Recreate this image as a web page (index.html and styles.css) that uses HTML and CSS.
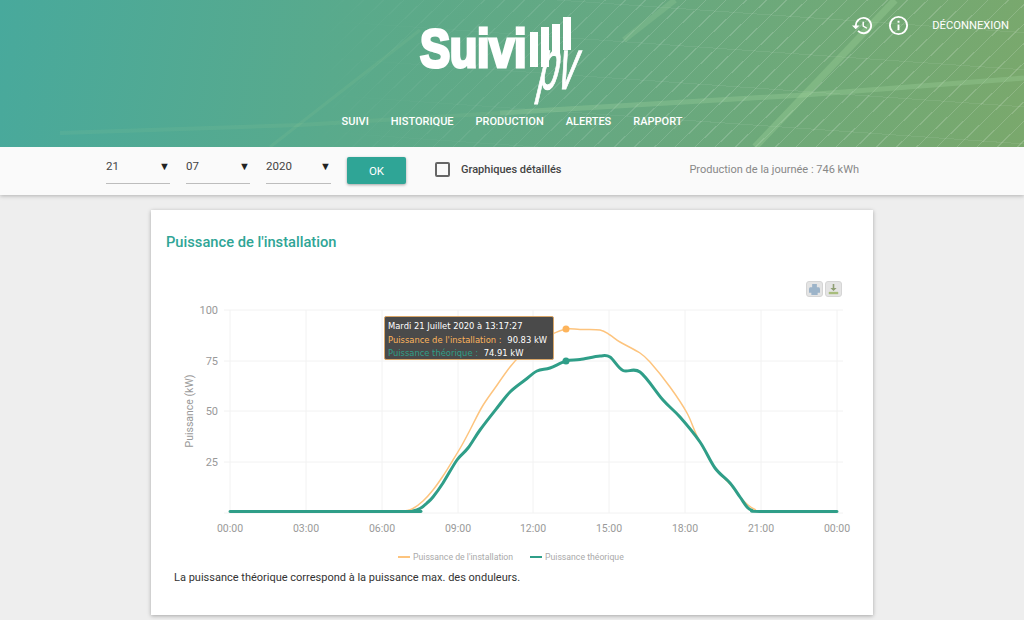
FILE: index.html
```html
<!DOCTYPE html>
<html lang="fr">
<head>
    <meta charset="UTF-8">
    <title>Suivi PV</title>
    <link rel="stylesheet" href="styles.css">
</head>
<body>
    <header class="site-header">
        <div class="panel-lines"></div>
        <svg class="header-texture" viewBox="0 0 1024 147" aria-hidden="true">
            <g stroke="#a5d6a0" fill="none">
                <path d="M60 133L300 125 500 113" stroke-opacity=".1" stroke-width="4"/>
                <path d="M500 113L804 95 1024 78" stroke-opacity=".28" stroke-width="5"/>
                <path d="M270 147L420 30" stroke-opacity=".1" stroke-width="3"/>
                <path d="M755 147L895 0" stroke-opacity=".3" stroke-width="7"/>
                <path d="M624 40L675 0" stroke-opacity=".22" stroke-width="6"/>
            </g>
        </svg>
        <div class="header-actions">
            <svg class="action-icon" viewBox="0 0 24 24" aria-hidden="true">
                <path fill="#fff" d="M13 3a9 9 0 0 0-9 9H1l3.9 3.9L9 12H6a7 7 0 1 1 2.05 4.95l-1.42 1.42A9 9 0 1 0 13 3zm-1 5v5l4.25 2.52.77-1.28-3.52-2.09V8z"/>
            </svg>
            <svg class="action-icon" viewBox="0 0 24 24" aria-hidden="true">
                <path fill="#fff" d="M11 7h2v2h-2zm0 4h2v6h-2zm1-9a10 10 0 1 0 0 20 10 10 0 0 0 0-20zm0 18a8 8 0 1 1 0-16 8 8 0 0 1 0 16z"/>
            </svg>
            <a class="logout" href="#">DÉCONNEXION</a>
        </div>
        <div class="logo">
            <span class="logo-word">Suivi</span>
            <span class="logo-bars"><i></i><i></i><i></i><i></i></span>
            <span class="logo-pv">pv</span>
        </div>
        <nav class="main-nav">
            <a href="#">SUIVI</a>
            <a href="#">HISTORIQUE</a>
            <a href="#">PRODUCTION</a>
            <a href="#">ALERTES</a>
            <a href="#">RAPPORT</a>
        </nav>
    </header>

    <section class="toolbar">
        <div class="field day"><span>21</span><b>▼</b></div>
        <div class="field month"><span>07</span><b>▼</b></div>
        <div class="field year"><span>2020</span><b>▼</b></div>
        <button class="btn-ok">OK</button>
        <label class="check"><span class="check-box"></span>Graphiques détaillés</label>
        <p class="production">Production de la journée : 746 kWh</p>
    </section>

    <main class="card">
        <h2>Puissance de l'installation</h2>
        <div class="chart">
            <div class="export">
                <button class="export-btn">
                    <svg viewBox="0 0 16 14" aria-hidden="true"><path fill="#9db4c9" d="M5 0h6v4h3l1 2v5h-3v3H4v-3H1V6l1-2h3z"/></svg>
                </button>
                <button class="export-btn">
                    <svg viewBox="0 0 16 14" aria-hidden="true"><path fill="#8f9f74" d="M7 0h2v5h3l-4 4-4-4h3z"/><path fill="#a8bd7c" d="M2 10h12v3H2z"/></svg>
                </button>
            </div>
            <svg class="plot" viewBox="166 270 692 295">
                <g class="grid">
                    <path d="M230 310V513M306 310V513M382 310V513M458 310V513M533 310V513M609 310V513M685 310V513M761 310V513M837 310V513"/>
                    <path d="M224 310H843M224 361H843M224 411H843M224 462H843M224 513H843"/>
                </g>
                <g class="y-labels">
                    <text x="218" y="314">100</text>
                    <text x="218" y="365">75</text>
                    <text x="218" y="415">50</text>
                    <text x="218" y="466">25</text>
                </g>
                <text class="y-title" transform="translate(193 411) rotate(-90)">Puissance (kW)</text>
                <g class="x-labels">
                    <text x="230" y="532">00:00</text>
                    <text x="306" y="532">03:00</text>
                    <text x="382" y="532">06:00</text>
                    <text x="458" y="532">09:00</text>
                    <text x="533" y="532">12:00</text>
                    <text x="609" y="532">15:00</text>
                    <text x="685" y="532">18:00</text>
                    <text x="761" y="532">21:00</text>
                    <text x="837" y="532">00:00</text>
                </g>
                <path id="line-install" class="line-install"/>
                <path id="line-theo" class="line-theo"/>
                <circle cx="566" cy="329" r="3.5" fill="#fdb45c"/>
                <circle cx="566" cy="361" r="3.5" fill="#2f9e88"/>
                <g class="legend">
                    <path d="M398 557H410" stroke="#fdc47e" stroke-width="2"/>
                    <text x="413" y="560">Puissance de l'installation</text>
                    <path d="M530 557H542" stroke="#2f9e88" stroke-width="2"/>
                    <text x="545" y="560">Puissance théorique</text>
                </g>
            </svg>
            <div class="tooltip">
                <div>Mardi 21 Juillet 2020 à 13:17:27</div>
                <div><span class="tip-install">Puissance de l'installation :</span> <b>90.83 kW</b></div>
                <div><span class="tip-theo">Puissance théorique :</span> <b>74.91 kW</b></div>
            </div>
        </div>
        <p class="note">La puissance théorique correspond à la puissance max. des onduleurs.</p>
    </main>
    <script src="chart.js"></script>
</body>
</html>
```
FILE: styles.css
```css
/* General Styles */
* {
    margin: 0;
    padding: 0;
    box-sizing: border-box;
}

html, body {
    height: 620px;
    overflow: hidden;
}

body {
    font-family: Roboto, sans-serif;
    background: #eeeeee;
    color: #333;
}

/* Header */
.site-header {
    position: relative;
    height: 147px;
    background: linear-gradient(100deg, #48a99c 0%, #5aaa8b 35%, #66a881 60%, #70a977 80%, #7aa86c 100%);
    overflow: hidden;
    display: flex;
    flex-direction: column;
    align-items: center;
}

.panel-lines {
    position: absolute;
    inset: 0;
    background:
        repeating-linear-gradient(136deg, rgba(255, 255, 255, .16) 0 1px, transparent 1px 14px),
        repeating-linear-gradient(4deg, rgba(255, 255, 255, .07) 0 1px, transparent 1px 37px);
    -webkit-mask-image: linear-gradient(90deg, transparent 30%, #000 70%);
    mask-image: linear-gradient(90deg, transparent 30%, #000 70%);
}

.header-texture {
    position: absolute;
    left: 0;
    top: 0;
    width: 100%;
    height: 100%;
}

.header-actions {
    position: absolute;
    top: 14px;
    right: 15px;
    display: flex;
    align-items: center;
}

.action-icon {
    width: 23px;
    height: 23px;
    margin-right: 13px;
}

.logout {
    margin-left: 9px;
    color: #fff;
    font-size: 11.2px;
    text-decoration: none;
}

.logo {
    position: relative;
    width: 156px;
    height: 85px;
    margin: 17px 0 0 -30px;
    color: #fff;
}

.logo-word {
    position: absolute;
    left: 1px;
    top: 1px;
    font-family: "Liberation Sans", sans-serif;
    font-size: 54px;
    font-weight: 700;
    letter-spacing: -.5px;
    line-height: 60px;
    transform: scaleX(.84);
    transform-origin: left top;
    -webkit-text-stroke: 3.2px #fff;
}

.logo-bars {
    position: absolute;
    left: 111px;
    top: 0;
    display: flex;
    align-items: flex-start;
    gap: 3px;
}

.logo-bars i {
    display: block;
    width: 8px;
    background: #fff;
}

.logo-bars i:nth-child(1) { margin-top: 15px; height: 35px; }
.logo-bars i:nth-child(2) { margin-top: 10px; height: 40px; }
.logo-bars i:nth-child(3) { margin-top: 7px; height: 32px; }
.logo-bars i:nth-child(4) { height: 33px; }

.logo-pv {
    position: absolute;
    left: 127px;
    top: 11px;
    font-family: "Liberation Sans", sans-serif;
    font-style: italic;
    font-size: 72px;
    line-height: 72px;
    letter-spacing: -1px;
    transform: skewX(-8deg) scaleX(.5);
    transform-origin: left top;
    -webkit-text-stroke: 1.2px #fff;
}

.main-nav {
    position: relative;
    display: flex;
    gap: 22px;
    margin-top: 13px;
}

.main-nav a {
    color: #fff;
    font-size: 11px;
    line-height: 14px;
    font-weight: 500;
    text-decoration: none;
}

/* Toolbar */
.toolbar {
    height: 48px;
    background: #fafafa;
    box-shadow: 0 1px 4px rgba(0, 0, 0, .25);
    display: flex;
    align-items: flex-start;
    padding-left: 106px;
}

.field {
    display: flex;
    justify-content: space-between;
    align-items: center;
    height: 37px;
    margin-right: 16px;
    padding-top: 2px;
    border-bottom: 1px solid #bdbdbd;
    font-size: 11.5px;
    color: #444;
    width: 64px;
}

.field b {
    font-size: 11px;
    font-weight: 400;
    color: #222;
}

.field.year {
    width: 65px;
}

.btn-ok {
    width: 59px;
    height: 27px;
    margin-top: 10px;
    border: none;
    border-radius: 2px;
    background: #2fa596;
    box-shadow: 0 1px 3px rgba(0, 0, 0, .35);
    color: #fff;
    font-family: inherit;
    font-size: 11.5px;
    font-weight: 400;
}

.check {
    display: flex;
    align-items: center;
    height: 44px;
    margin-left: 29px;
    font-size: 11px;
    font-weight: 500;
    color: #444;
}

.check-box {
    width: 15px;
    height: 15px;
    margin-right: 11px;
    border: 2px solid #666;
    border-radius: 2px;
}

.production {
    margin-left: auto;
    margin-right: 165px;
    line-height: 45px;
    font-size: 11px;
    color: #888;
}

/* Card */
.card {
    width: 722px;
    height: 405px;
    margin: 15px 0 0 151px;
    padding: 0 15px;
    background: #fff;
    box-shadow: 0 1px 4px rgba(0, 0, 0, .3);
}

.card h2 {
    padding-top: 24px;
    font-size: 14.7px;
    line-height: 17px;
    font-weight: 500;
    color: #2fa596;
}

.chart {
    position: relative;
    height: 295px;
    margin-top: 19px;
}

.plot {
    display: block;
    width: 692px;
    height: 295px;
    font-family: Roboto, sans-serif;
}

.grid path {
    fill: none;
    stroke: #f2f2f2;
    stroke-width: 1;
}

.y-labels text {
    font-size: 11px;
    fill: #999;
    text-anchor: end;
}

.x-labels text {
    font-size: 10.5px;
    fill: #999;
    text-anchor: middle;
}

.y-title {
    font-size: 10.5px;
    fill: #999;
    text-anchor: middle;
}

.legend text {
    font-size: 8.7px;
    fill: #aaa;
}

.line-install,
.line-theo {
    fill: none;
    stroke-linejoin: round;
    stroke-linecap: round;
}

.line-install {
    stroke: #fdc47e;
    stroke-width: 1.5;
}

.line-theo {
    stroke: #2f9e88;
    stroke-width: 3;
}

.export {
    position: absolute;
    top: 11px;
    right: 16px;
    display: flex;
    gap: 2px;
}

.export-btn {
    display: flex;
    align-items: center;
    justify-content: center;
    width: 17px;
    height: 16px;
    border: 1px solid #d5d5d5;
    border-radius: 3px;
    background: #e4e4e4;
}

.export-btn svg {
    width: 13px;
    height: 11px;
}

.tooltip {
    position: absolute;
    left: 218px;
    top: 46px;
    width: 170px;
    height: 44px;
    padding: 3px;
    background: rgba(60, 60, 60, .93);
    border: 1px solid #d9a668;
    border-radius: 2px;
    font-family: "DejaVu Sans", sans-serif;
    font-size: 8.4px;
    line-height: 13.5px;
    color: #fff;
    white-space: nowrap;
}

.tooltip b {
    font-weight: 400;
    margin-left: 3px;
}

.tip-install {
    color: #fdb45c;
}

.tip-theo {
    color: #2f9e88;
}

.note {
    margin: 6px 0 0 8px;
    font-size: 11px;
    line-height: 14px;
    color: #333;
}
```
FILE: chart.js
```js
// Curves of the day, in plot coordinates
const installPoints = [[230, 511.5], [400, 511.5], [407, 510.5], [413, 508.5], [423, 501], [433, 490], [443, 476], [453, 460], [462, 445], [470, 430], [482, 407], [495, 388], [510, 367], [522, 354], [537, 342], [550, 335], [566, 329], [580, 329.5], [600, 330], [610, 335], [620, 342], [640, 353], [650, 362], [670, 387], [687, 413], [698, 438], [715, 468], [730, 484], [740, 497], [748, 505], [755, 509.5], [763, 511.5], [837, 511.5]];
const theoPoints = [[230, 511.5], [406, 511.5], [413, 511], [420, 508.5], [427, 503], [433, 497], [443, 483], [457, 460], [468, 448], [480, 430], [497, 408], [510, 392], [525, 380], [537, 371], [550, 368], [566, 361], [580, 359.5], [600, 356], [610, 357], [623, 370.5], [640, 372], [663, 400], [680, 417], [700, 442], [715, 468], [730, 483], [740, 497], [747, 507], [752, 510.5], [760, 511.5], [837, 511.5]];

// Catmull-Rom through the points, written as cubic beziers
function smoothPath(points) {
    let d = `M${points[0][0]} ${points[0][1]}`;
    for (let i = 0; i < points.length - 1; i++) {
        const p0 = points[i - 1] || points[i];
        const p1 = points[i];
        const p2 = points[i + 1];
        const p3 = points[i + 2] || p2;
        const c1x = p1[0] + (p2[0] - p0[0]) / 6;
        const c1y = p1[1] + (p2[1] - p0[1]) / 6;
        const c2x = p2[0] - (p3[0] - p1[0]) / 6;
        const c2y = p2[1] - (p3[1] - p1[1]) / 6;
        d += `C${c1x} ${c1y} ${c2x} ${c2y} ${p2[0]} ${p2[1]}`;
    }
    return d;
}

document.getElementById('line-install').setAttribute('d', smoothPath(installPoints));
document.getElementById('line-theo').setAttribute('d', smoothPath(theoPoints));
```
